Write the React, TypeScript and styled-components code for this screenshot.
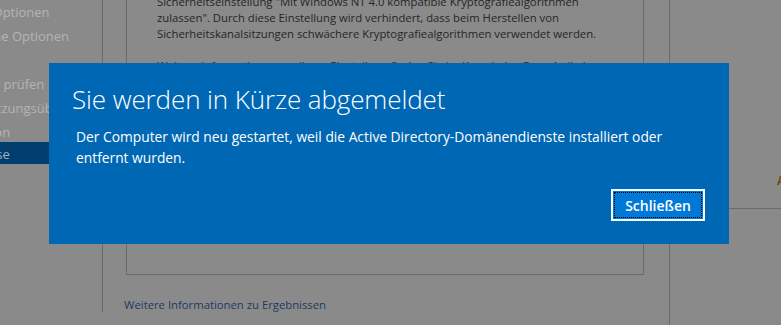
import React from "react";
import styled, { createGlobalStyle } from "styled-components";

const Global = createGlobalStyle`
  html, body { margin: 0; padding: 0; }
  body {
    width: 781px;
    height: 325px;
    overflow: hidden;
    background: #8a8a8a;
    font-family: "Open Sans", "Noto Sans", sans-serif;
  }
`;

const Window = styled.div`
  position: relative;
  width: 781px;
  height: 325px;
  display: flex;
  background: #8a8a8a;
  overflow: hidden;
`;

const Sidebar = styled.nav`
  width: 103px;
  height: 312px;
  border-right: 1px solid #6b6b6b;
  overflow: hidden;
  display: flex;
  flex-direction: column;
  box-sizing: border-box;
  flex-shrink: 0;
`;

const NavItem = styled.div<{ $active?: boolean; $indent: number }>`
  font-size: 13px;
  white-space: nowrap;
  color: ${(p) => (p.$active ? "#9fb0c2" : "#b4b4b4")};
  background: ${(p) => (p.$active ? "#003f6d" : "transparent")};
  text-indent: ${(p) => p.$indent}px;
  margin-top: ${(p) => (p.$active ? "-2px" : "0")};
  height: ${(p) => (p.$active ? "22px" : "24px")};
  line-height: 24px;
`;

const Main = styled.section`
  width: 566px;
  flex-shrink: 0;
  display: flex;
  flex-direction: column;
  padding-left: 23px;
  box-sizing: border-box;
`;

const ResultBox = styled.div`
  width: 518px;
  height: 289px;
  margin-top: -14px;
  box-sizing: border-box;
  border: 1px solid #6b6b6b;
  padding: 7px 0 0 30px;
  font-size: 11.3px;
  line-height: 16px;
  color: #262626;
`;

const Para = styled.p`
  margin: 0 0 16px 0;
  width: 470px;
`;

const MoreLink = styled.a`
  margin-top: 22px;
  margin-left: -2px;
  font-size: 11.3px;
  color: #1b3b60;
  text-decoration: none;
`;

const RightPanel = styled.aside`
  flex: 1;
  border-left: 1px solid #6b6b6b;
  display: flex;
  flex-direction: column;
`;

const RightTop = styled.div`
  height: 208px;
  border-bottom: 1px solid #6b6b6b;
  position: relative;
`;

const Glyph = styled.span`
  position: absolute;
  left: 107px;
  top: 172px;
  font-size: 12px;
  font-weight: bold;
  color: #6e4a1c;
`;

const Dialog = styled.div`
  position: absolute;
  left: 49px;
  top: 63px;
  width: 680px;
  height: 181px;
  box-sizing: border-box;
  background: #0067b4;
  padding: 18px 24px 23px 23px;
  display: flex;
  flex-direction: column;
  color: #ffffff;
`;

const Title = styled.h1`
  margin: 0;
  font-size: 26px;
  font-weight: 300;
  line-height: 36px;
  letter-spacing: -0.1px;
`;

const Message = styled.p`
  margin: 9px 0 0 4px;
  font-size: 13.8px;
  line-height: 21px;
  width: 620px;
`;

const Actions = styled.div`
  margin-top: auto;
  display: flex;
  justify-content: flex-end;
`;

const CloseButton = styled.button`
  width: 94px;
  height: 32px;
  box-sizing: border-box;
  background: #0078d7;
  border: 2px solid #ffffff;
  color: #ffffff;
  font-family: "Open Sans", "Noto Sans", sans-serif;
  font-size: 14px;
  font-weight: 600;
  padding: 0;
  outline: 1px dotted #000000;
  outline-offset: -4px;
  cursor: pointer;
`;

const navItems = [
  { label: "DNS-Optionen", indent: -38 },
  { label: "Zusätzliche Optionen", indent: -59 },
  { label: "Pfade", indent: -59 },
  { label: "Optionen prüfen", indent: -57 },
  { label: "Voraussetzungsüberprüfung", indent: -59 },
  { label: "Installation", indent: -57 },
  { label: "Ergebnisse", indent: -56, active: true },
];

export default function App() {
  return (
    <>
      <Global />
      <Window>
        <Sidebar>
          {navItems.map((n) => (
            <NavItem key={n.label} $indent={n.indent} $active={n.active}>
              {n.label}
            </NavItem>
          ))}
        </Sidebar>
        <Main>
          <ResultBox>
            <Para>
              Sicherheitseinstellung "Mit Windows NT 4.0 kompatible Kryptografiealgorithmen
              zulassen". Durch diese Einstellung wird verhindert, dass beim Herstellen von
              Sicherheitskanalsitzungen schwächere Kryptografiealgorithmen verwendet werden.
            </Para>
            <Para>
              Weitere Informationen zu dieser Einstellung finden Sie im Knowledge Base-Artikel 942564
              (http://go.microsoft.com/fwlink/?LinkId=104751).
            </Para>
          </ResultBox>
          <MoreLink href="#">Weitere Informationen zu Ergebnissen</MoreLink>
        </Main>
        <RightPanel>
          <RightTop>
            <Glyph>A</Glyph>
          </RightTop>
        </RightPanel>
        <Dialog role="dialog">
          <Title>Sie werden in Kürze abgemeldet</Title>
          <Message>
            Der Computer wird neu gestartet, weil die Active Directory-Domänendienste installiert oder
            entfernt wurden.
          </Message>
          <Actions>
            <CloseButton>Schließen</CloseButton>
          </Actions>
        </Dialog>
      </Window>
    </>
  );
}
